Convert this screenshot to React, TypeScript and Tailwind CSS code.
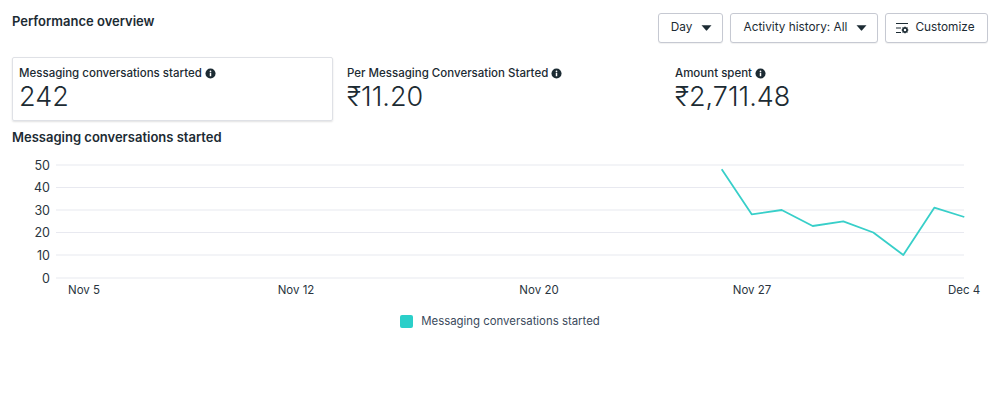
import React from 'react';

const FONT = 'font-["Inter","Noto_Sans",sans-serif]';

const metrics = [
  { label: 'Messaging conversations started', value: '242', selected: true },
  { label: 'Per Messaging Conversation Started', value: '₹11.20', selected: false },
  { label: 'Amount spent', value: '₹2,711.48', selected: false },
];

const yTicks = [
  { label: '50', y: 165 },
  { label: '40', y: 187.5 },
  { label: '30', y: 210 },
  { label: '20', y: 232.5 },
  { label: '10', y: 255 },
  { label: '0', y: 278 },
];

const xTicks = [
  { label: 'Nov 5', x: 84 },
  { label: 'Nov 12', x: 296 },
  { label: 'Nov 20', x: 539 },
  { label: 'Nov 27', x: 752 },
  { label: 'Dec 4', x: 964 },
];

const linePoints = '721.7,169.3 751.7,214.3 781.7,210 812.7,226 843.3,221.3 873.3,232.5 903.3,255 934.3,207.7 964.3,217';

function InfoIcon() {
  return (
    <svg width="11" height="11" viewBox="0 0 12 12" className="shrink-0">
      <circle cx="6" cy="6" r="5.5" fill="#1c2b33" />
      <rect x="5.2" y="5.2" width="1.6" height="3.8" fill="#fff" />
      <circle cx="6" cy="3.6" r="0.95" fill="#fff" />
    </svg>
  );
}

function Caret() {
  return (
    <svg width="11" height="6" viewBox="0 0 11 6" className="shrink-0">
      <path d="M0.5 0.3h10L6.1 5.3a.8.8 0 0 1-1.2 0z" fill="#1c2b33" />
    </svg>
  );
}

function CustomizeIcon() {
  return (
    <svg width="14" height="14" viewBox="0 0 14 14" className="shrink-0" fill="none">
      <path d="M1 2.5h12M1 7h5M1 11.5h5" stroke="#1c2b33" strokeWidth="1" />
      <circle cx="10" cy="9" r="2.1" stroke="#1c2b33" strokeWidth="1.7" />
      <path d="M10 5.6v1.2M10 11.2v1.2M6.6 9h1.2M12.2 9h1.2M7.6 6.6l.8.8M11.6 10.6l.8.8M12.4 6.6l-.8.8M8.4 10.6l-.8.8" stroke="#1c2b33" strokeWidth="1" />
    </svg>
  );
}

function FilterButton({ className, children }: { className: string; children: React.ReactNode }) {
  return (
    <button className={`h-[30px] flex items-center justify-center rounded-[3px] border border-[#c6c9d2] bg-white text-[11.8px] text-[#1c2b33] shadow-[0_1px_1px_rgba(0,0,0,0.06)] ${className}`}>
      {children}
    </button>
  );
}

export default function App() {
  return (
    <div className={`${FONT} w-[1000px] h-[416px] bg-white text-[#1c2b33] overflow-hidden`}>
      <div className="flex items-start justify-between pl-3 pr-3 pt-[13px] h-[57px]">
        <h2 className="text-[13px] font-semibold leading-4">Performance overview</h2>
        <div className="flex gap-[7px]">
          <FilterButton className="w-[65px] gap-[9px] pl-[2px]">
            <span>Day</span>
            <Caret />
          </FilterButton>
          <FilterButton className="w-[148px] gap-[9px] pl-[3px]">
            <span>Activity history: All</span>
            <Caret />
          </FilterButton>
          <FilterButton className="w-[103px] gap-[6px] pr-[3px]">
            <CustomizeIcon />
            <span>Customize</span>
          </FilterButton>
        </div>
      </div>

      <div className="flex pl-3 h-[64px]">
        {metrics.map((m) => (
          <div
            key={m.label}
            className={`w-[321px] mr-[7px] pl-[6px] pt-[7px] rounded-[2px] ${m.selected ? 'border border-[#dfe1e6] shadow-[0_1px_2px_rgba(0,0,0,0.12)]' : 'border border-transparent'}`}
          >
            <div className="flex items-center gap-[3px] text-[11.5px] font-medium leading-4">
              <span>{m.label}</span>
              <InfoIcon />
            </div>
            <div className="text-[27px] font-light leading-[34px] mt-[-1px]">{m.value}</div>
          </div>
        ))}
      </div>

      <h3 className="pl-3 mt-[8px] text-[13px] font-semibold leading-4">Messaging conversations started</h3>

      {/* chart area */}
      <div className="h-[168px]">
        <svg width="1000" height="168" viewBox="0 145 1000 168">
          {yTicks.map((t) => (
            <g key={t.label}>
              <line x1="56" x2="964" y1={t.y} y2={t.y} stroke="#e8e9f0" strokeWidth="1.2" />
              <text x="50" y={t.y + 4.5} textAnchor="end" fontSize="12.5" fill="#2a3540">{t.label}</text>
            </g>
          ))}
          {xTicks.map((t) => (
            <text key={t.label} x={t.x} y="294" textAnchor="middle" fontSize="11.5" fill="#2a3540">{t.label}</text>
          ))}
          <polyline points={linePoints} fill="none" stroke="#38cfc9" strokeWidth="1.8" strokeLinejoin="round" />
        </svg>
      </div>

      <div className="flex items-center justify-center gap-[8px]">
        <span className="w-[13px] h-[13px] rounded-[2px] bg-[#2bcfc9]" />
        <span className="text-[11.4px] leading-4 text-[#3a4a5c]">Messaging conversations started</span>
      </div>
    </div>
  );
}
